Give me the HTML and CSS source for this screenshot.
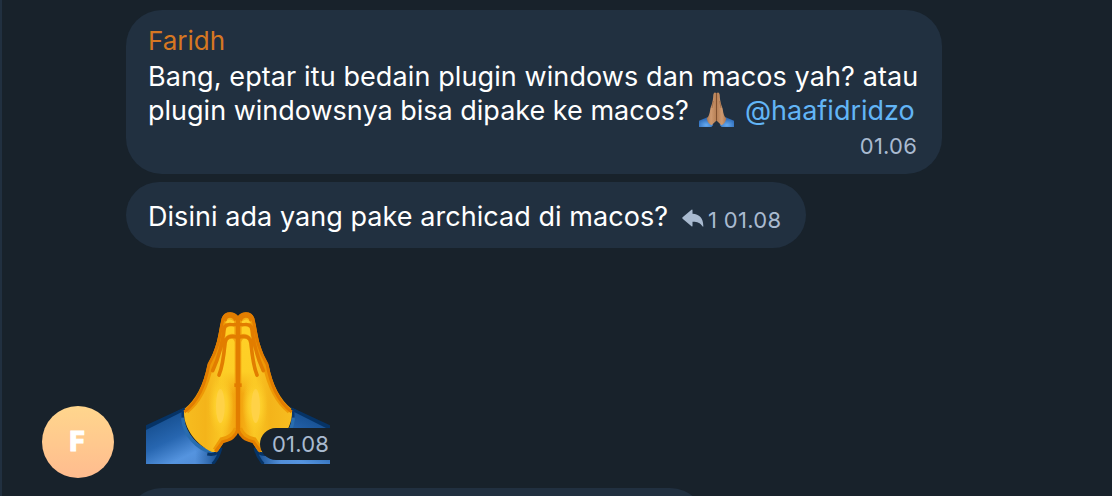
FILE: index.html
```html
<!DOCTYPE html>
<html lang="id">
<head>
  <meta charset="UTF-8" />
  <meta name="viewport" content="width=device-width, initial-scale=1.0">
  <title>Chat</title>
  <link rel="stylesheet" href="styles.css">
</head>
<body>

  <div class="chat">
    <div class="avatar">F</div>

    <div class="messages">
      <div class="message message-long">
        <div class="author">Faridh</div>
        <div class="text line-one">Bang, eptar itu bedain plugin windows dan macos yah? atau</div>
        <div class="text line-two">
          <span class="question">plugin windowsnya bisa dipake ke macos?</span>
          <svg class="emoji" viewBox="0 0 105 105">
            <defs>
              <linearGradient id="skin" x1="0" x2="1">
                <stop offset="0" stop-color="#a9744f" />
                <stop offset="0.45" stop-color="#cf9a70" />
                <stop offset="1" stop-color="#b67f55" />
              </linearGradient>
              <radialGradient id="cuff" cx="0.5" cy="0.8" r="0.7">
                <stop offset="0" stop-color="#66aaf0" />
                <stop offset="1" stop-color="#2866b5" />
              </radialGradient>
            </defs>
            <g id="smallHand">
              <path fill="url(#cuff)" d="M0 86 L25 76 L43 99 L37 105 H0Z" />
              <path fill="url(#skin)" d="M52 3 Q45 -2 43 8 C42 30 38 38 34 50 C32 66 29 75 23 79 Q26 95 38 100 Q46 91 52 86Z" />
            </g>
            <use href="#smallHand" transform="translate(105 0) scale(-1 1)" />
            <path d="M52.500 4V86" stroke="#80502f" stroke-width="3" />
            <path d="M43 27L39 48M62 27L66 48" stroke="#925f3b" stroke-width="2" />
          </svg>
          <a class="mention">@haafidridzo</a>
        </div>
        <div class="time">01.06</div>
      </div>

      <div class="message message-short">
        <div class="text line-three">Disini ada yang pake archicad di macos?</div>
        <svg class="reply" viewBox="0 0 22 18">
          <path d="M9.500 0.700 Q10.500 0 10.500 1.300 V4.700 C17.500 5 21.500 9.500 21.300 17.400 Q21 18.200 20.300 17.100 C18 13.500 15 12.600 10.500 12.700 V16.700 Q10.500 18 9.500 17.200 L0.600 9.700 Q0 9 0.600 8.300Z" />
        </svg>
        <div class="time">1 01.08</div>
      </div>

      <div class="sticker">
        <svg class="sticker-image" viewBox="18 24 552 456">
          <defs>
            <linearGradient id="palm" x1="0" y1="0" x2="1" y2="0">
              <stop offset="0" stop-color="#f7bd20" />
              <stop offset="0.4" stop-color="#f4b41a" />
              <stop offset="0.7" stop-color="#fac724" />
              <stop offset="1" stop-color="#f19c0a" />
            </linearGradient>
            <linearGradient id="finger" x1="0" y1="0" x2="0" y2="1">
              <stop offset="0" stop-color="#ffd026" />
              <stop offset="0.6" stop-color="#fdce26" />
              <stop offset="1" stop-color="#fac724" stop-opacity="0" />
            </linearGradient>
            <radialGradient id="glow">
              <stop offset="0" stop-color="#ffd345" />
              <stop offset="0.5" stop-color="#fdce2a" />
              <stop offset="1" stop-color="#fac724" stop-opacity="0" />
            </radialGradient>
            <linearGradient id="sleeve" gradientUnits="userSpaceOnUse" x1="75" y1="335" x2="145" y2="480">
              <stop offset="0" stop-color="#164f90" />
              <stop offset="0.45" stop-color="#2766b0" />
              <stop offset="0.85" stop-color="#5594df" />
              <stop offset="1" stop-color="#528fd9" />
            </linearGradient>
            <linearGradient id="sleeveEnd" gradientUnits="userSpaceOnUse" x1="165" y1="0" x2="244" y2="0">
              <stop offset="0" stop-color="#1b559a" stop-opacity="0" />
              <stop offset="1" stop-color="#0d417e" />
            </linearGradient>
          </defs>
          <g id="hand">
            <path fill="url(#sleeve)" d="M18 368 L132 312 C124 365 154 420 225 447 L244 432 Q238 462 215 480 H18Z" />
            <path fill="url(#sleeveEnd)" d="M150 405 Q180 440 225 447 L244 432 Q238 462 215 480 H150Z" />
            <path fill="#063365" d="M18 364 L136 309 L133 322 L124 325 L18 378Z" />
            <path fill="none" stroke="#0a3970" stroke-width="9" d="M129 318V340" />
            <path fill="none" stroke="#286daf" stroke-width="10" d="M128 342 C132 390 168 436 222 447" />
            <path fill="none" stroke="#063365" stroke-width="9" d="M202 450 Q220 454 231 446 L243 432 Q236 460 218 480" />
            <path fill="url(#palm)" d="M294 42 C286 22 252 23 247 43 C237 73 242 112 205 180 C192 242 174 292 132 322 C130 369 165 421 216 444 H230 L250 414 C276 408 286 400 294 376Z" />
            <path fill="none" stroke="#ee9906" stroke-width="17" d="M255 45 C242 78 248 120 211 185 C199 242 178 290 139 321" />
            <path fill="none" stroke="#e27d00" stroke-width="9" d="M294 45 C286 24 256 24 250 43 C239 74 245 116 207 181 C195 242 176 291 133 324" />
            <path fill="none" stroke="#ed9907" stroke-width="17" d="M226 439 L246 408 C270 404 282 394 290 374" />
            <path fill="none" stroke="#e27d00" stroke-width="9" d="M226 443 L248 413 C274 408 286 398 294 376" />
            <ellipse cx="243" cy="305" rx="38" ry="92" fill="url(#glow)" />
            <ellipse cx="241" cy="306" rx="13" ry="51" fill="#ffd247" />
            <path fill="url(#finger)" d="M262 110 Q279 96 284 114 V270 H232 C236 220 252 175 262 110Z" />
            <path fill="#ffce22" d="M257 78 Q269 58 283 70 V90 Q266 86 258 97Z" />
            <path fill="#ffce29" d="M255 56 Q266 39 282 52 V58Z" />
            <path fill="none" stroke="#e27d00" stroke-width="16" d="M251 49 Q256 33 270 33 Q284 33 290 48" />
            <path fill="none" stroke="#e27d00" stroke-width="10" d="M250 77 Q256 59 275 62 H294" />
            <path fill="none" stroke="#e27d00" stroke-width="11" stroke-linecap="round" d="M253 70 C248 119 240 152 218 200 M294 100 C268 92 257 101 255 118 C251 160 247 190 237 213" />
          </g>
          <use href="#hand" transform="translate(588 0) scale(-1 1)" />
          <path fill="none" stroke="#e27d00" stroke-width="13" d="M294 38V377" />
          <path fill="none" stroke="#e27d00" stroke-width="22" d="M294 238V249" />
        </svg>
        <div class="time sticker-time">01.08</div>
      </div>

      <div class="message message-next"></div>
    </div>
  </div>

</body>
</html>
```

FILE: styles.css
```css
* {
  box-sizing: border-box;
}

body {
  margin: 0;
  font-family: Inter, "Liberation Sans", sans-serif;
  background-color: #18222b;
  color: #fff;
}

.chat {
  display: flex;
  height: 496px;
  overflow: hidden;
  border-left: 2px solid #213040;
  padding: 10px 0 0 40px;
}

.avatar {
  display: flex;
  flex: none;
  align-items: center;
  justify-content: center;
  width: 72px;
  height: 72px;
  margin: 396px 12px 0 0;
  border-radius: 50%;
  background: linear-gradient(#ffd68d, #ffbc8f);
  font-family: Roboto, sans-serif;
  font-size: 27px;
  font-weight: 900;
  -webkit-text-stroke: 1px #fff;
  padding-right: 2px;
}

.message {
  border-radius: 36px;
  background-color: #213040;
}

.message-long {
  width: 816px;
  height: 164px;
  padding: 14px 25px 0 22px;
}

.author {
  height: 34px;
  line-height: 34px;
  font-size: 26px;
  color: #d67722;
}

.text {
  height: 34px;
  line-height: 34px;
  font-size: 27px;
  white-space: nowrap;
}

.line-one {
  margin-top: 2px;
  letter-spacing: 0.1px;
}

.line-two {
  display: flex;
}

.question {
  width: 551px;
}

.emoji {
  width: 35px;
  height: 35px;
  margin: -2px 11px 0 0;
}

.mention {
  color: #62b5f6;
}

.time {
  font-size: 22px;
  line-height: 26px;
  letter-spacing: 0.2px;
  color: #a9bad0;
  white-space: nowrap;
}

.message-long .time {
  margin-top: 5px;
  text-align: right;
}

.message-short {
  display: flex;
  align-items: center;
  width: 680px;
  height: 66px;
  margin-top: 8px;
  padding: 3px 0 0 22px;
}

.line-three {
  width: 534px;
  letter-spacing: 0.05px;
}

.reply {
  width: 22px;
  height: 18px;
  margin: 3px 4px 0 0;
  fill: #a9bad0;
}

.message-short .time {
  margin-top: 6px;
  letter-spacing: 0.3px;
}

.sticker {
  position: relative;
  width: 184px;
  height: 152px;
  margin: 64px 0 0 20px;
}

.sticker-image {
  display: block;
  width: 184px;
  height: 152px;
}

.sticker-time {
  position: absolute;
  right: 0;
  bottom: 4px;
  width: 70px;
  height: 32px;
  padding-left: 12px;
  line-height: 32px;
  border-radius: 16px 0 0 16px;
  background-color: #18222b;
}

.message-next {
  width: 580px;
  height: 80px;
  margin-top: 24px;
}
```
